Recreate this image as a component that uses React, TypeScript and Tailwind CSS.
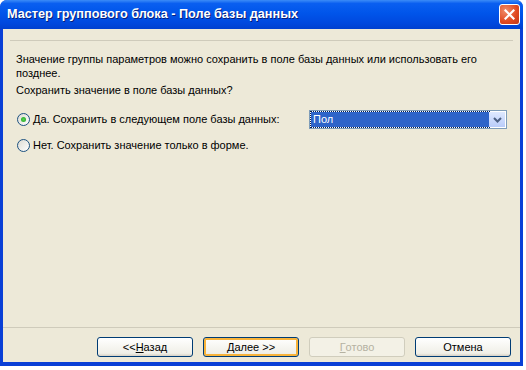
import { useState } from "react";

const XpButton = ({
  children,
  isDefault,
  disabled,
}: {
  children: React.ReactNode;
  isDefault?: boolean;
  disabled?: boolean;
}) => (
  <button
    disabled={disabled}
    className={
      "w-[96px] h-[20px] rounded-[3px] border text-[11px] leading-none flex items-center justify-center " +
      (disabled
        ? "border-[#d0cdbd] text-[#b5b2a2] bg-[#f3f1e6]"
        : isDefault
        ? "border-[#003c74] text-black bg-[linear-gradient(#ffffff,#f0efe7_85%,#d6d0c5)] shadow-[inset_0_0_0_2px_#f8b33a]"
        : "border-[#003c74] text-black bg-[linear-gradient(#ffffff,#f0efe7_85%,#d6d0c5)]")
    }
  >
    {children}
  </button>
);

const Radio = ({ checked, onClick }: { checked: boolean; onClick: () => void }) => (
  <span
    onClick={onClick}
    className="w-[13px] h-[13px] rounded-full border border-[#1c5180] bg-[linear-gradient(135deg,#dcdbd3,#ffffff)] flex items-center justify-center shrink-0"
  >
    {checked && (
      <span className="w-[5px] h-[5px] rounded-full bg-[radial-gradient(circle,#55d351,#21a121)]" />
    )}
  </span>
);

const App = () => {
  const [choice, setChoice] = useState<"yes" | "no">("yes");

  return (
    <div className="w-[526px] h-[370px] bg-white font-['Liberation_Sans',Arial,sans-serif]">
      <div className="w-[523px] h-[366px] flex flex-col bg-[#0a3fd6] rounded-t-[7px] overflow-hidden">
        {/* title bar */}
        <div className="h-[29px] shrink-0 flex items-center justify-between pl-[7px] pr-[3px] bg-[linear-gradient(#3c8cf7,#0a5ff0_12%,#0055ea_45%,#0048de_80%,#0040cf)]">
          <span className="text-white font-bold text-[12.7px] [text-shadow:1px_1px_#0a1f7a]">
            Мастер группового блока - Поле базы данных
          </span>
          <span className="w-[21px] h-[21px] rounded-[3px] border border-white flex items-center justify-center bg-[radial-gradient(circle_at_30%_30%,#f08d6a,#e0481f_60%,#c0381a)]">
            <svg width="11" height="11" viewBox="0 0 11 11">
              <path d="M1.5 1.5 L9.5 9.5 M9.5 1.5 L1.5 9.5" stroke="white" strokeWidth="2.2" strokeLinecap="square" />
            </svg>
          </span>
        </div>

        {/* body */}
        <div className="flex-1 mx-[3px] mb-[4px] bg-[#ede9d8] flex flex-col text-[11px] text-black">
          <div className="mt-[11px] mx-[7px] border-t border-[#cfcbbb]" />

          <div className="pl-[13px] pr-[10px] pt-[11px] leading-[14px]">
            <p>Значение группы параметров можно сохранить в поле базы данных или использовать его</p>
            <p>позднее.</p>
            <p className="mt-[3px]">Сохранить значение в поле базы данных?</p>
          </div>

          <div className="pl-[14px] pt-[13px] flex items-center">
            <Radio checked={choice === "yes"} onClick={() => setChoice("yes")} />
            <span className="ml-[3px] w-[276px]">Да. Сохранить в следующем поле базы данных:</span>
            <div className="w-[198px] h-[19px] border border-[#7f9db9] bg-white p-[1px] flex">
              <div className="flex-1 bg-[#2e64c9] text-white text-[11px] leading-[15px] pl-[2px] outline-1 outline-dotted outline-[#0a1f4a]">
                Пол
              </div>
              <div className="w-[16px] bg-[linear-gradient(#dfe9ff,#b9ccfa)] flex items-center justify-center">
                <svg width="9" height="6" viewBox="0 0 9 6">
                  <path d="M1 1 L4.5 4.5 L8 1" stroke="#4d6185" strokeWidth="2" fill="none" />
                </svg>
              </div>
            </div>
          </div>

          <div className="pl-[14px] pt-[8px] flex items-center">
            <Radio checked={choice === "no"} onClick={() => setChoice("no")} />
            <span className="ml-[3px]">Нет. Сохранить значение только в форме.</span>
          </div>

          <div className="flex-1" />
          <div className="border-t border-[#cfcbbb]" />

          <div className="h-[34px] flex items-start pt-[9px] pl-[94px] gap-[10px]">
            <XpButton>
              &lt;&lt;<u>Н</u>азад
            </XpButton>
            <XpButton isDefault>
              <u>Д</u>алее &gt;&gt;
            </XpButton>
            <XpButton disabled>
              <u>Г</u>отово
            </XpButton>
            <XpButton>Отмена</XpButton>
          </div>
        </div>
      </div>
    </div>
  );
};

export default App;
